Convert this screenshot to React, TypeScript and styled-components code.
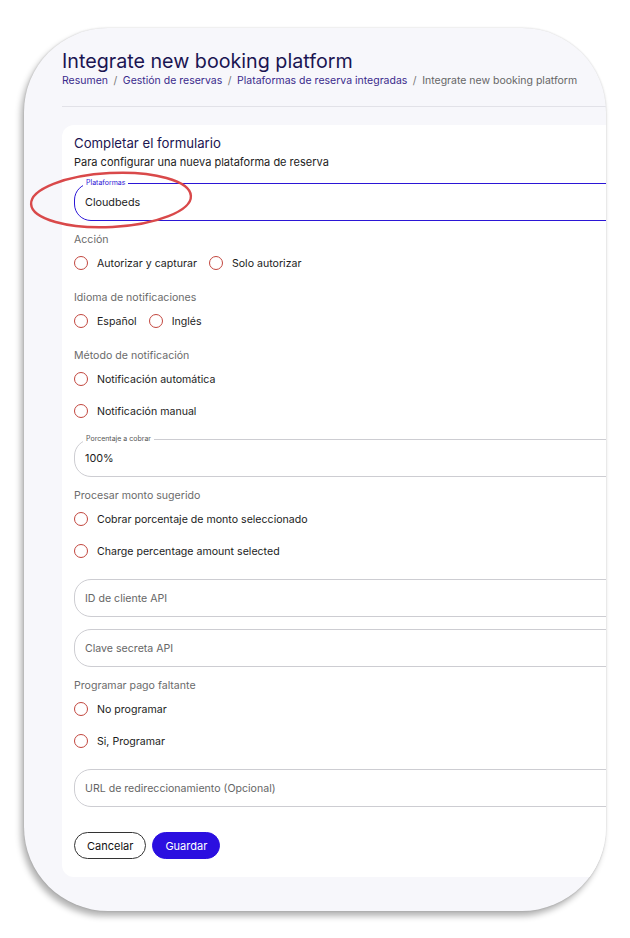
import React from "react";
import styled, { createGlobalStyle } from "styled-components";

const GlobalStyle = createGlobalStyle`
  * {
    box-sizing: border-box;
  }

  body {
    margin: 0;
    background: #ffffff;
    font-family: Inter, "Noto Sans", sans-serif;
    color: #1c1c1c;
  }
`;

const radioGroups = {
  accion: ["Autorizar y capturar", "Solo autorizar"],
  idioma: ["Español", "Inglés"],
  metodo: ["Notificación automática", "Notificación manual"],
  procesar: ["Cobrar porcentaje de monto seleccionado", "Charge percentage amount selected"],
  programar: ["No programar", "Si, Programar"],
};

const Radio = ({ label }: { label: string }) => (
  <RadioItem>
    <RadioCircle />
    <span>{label}</span>
  </RadioItem>
);

interface FieldProps {
  label?: string;
  value?: string;
  placeholder?: string;
  active?: boolean;
}

const Field = ({ label, value, placeholder, active }: FieldProps) => (
  <FieldBox $active={active}>
    {label && <FieldLabel $active={active}>{label}</FieldLabel>}
    {value ? <FieldValue>{value}</FieldValue> : <FieldPlaceholder>{placeholder}</FieldPlaceholder>}
  </FieldBox>
);

const App = () => {
  return (
    <Page>
      <GlobalStyle />
      <Frame>
        <Header>
          <Title>Integrate new booking platform</Title>
          <Breadcrumb>
            <Crumb>Resumen</Crumb>
            <Sep>/</Sep>
            <Crumb>Gestión de reservas</Crumb>
            <Sep>/</Sep>
            <Crumb>Plataformas de reserva integradas</Crumb>
            <Sep>/</Sep>
            <Current>Integrate new booking platform</Current>
          </Breadcrumb>
        </Header>
        <Divider />

        <Card>
          <CardHead>
            <CardTitle>Completar el formulario</CardTitle>
            <CardSubtitle>Para configurar una nueva plataforma de reserva</CardSubtitle>
          </CardHead>

          <Field label="Plataformas" value="Cloudbeds" active />

          <Group>
            <GroupLabel>Acción</GroupLabel>
            <InlineRow>
              {radioGroups.accion.map((r) => (
                <Radio key={r} label={r} />
              ))}
            </InlineRow>
          </Group>

          <Group>
            <GroupLabel>Idioma de notificaciones</GroupLabel>
            <InlineRow>
              {radioGroups.idioma.map((r) => (
                <Radio key={r} label={r} />
              ))}
            </InlineRow>
          </Group>

          <Group>
            <GroupLabel>Método de notificación</GroupLabel>
            {radioGroups.metodo.map((r) => (
              <Radio key={r} label={r} />
            ))}
          </Group>

          <Field label="Porcentaje a cobrar" value="100%" />

          <Group>
            <GroupLabel>Procesar monto sugerido</GroupLabel>
            {radioGroups.procesar.map((r) => (
              <Radio key={r} label={r} />
            ))}
          </Group>

          <Field placeholder="ID de cliente API" />
          <Field placeholder="Clave secreta API" />

          <Group>
            <GroupLabel>Programar pago faltante</GroupLabel>
            {radioGroups.programar.map((r) => (
              <Radio key={r} label={r} />
            ))}
          </Group>

          <Field placeholder="URL de redireccionamiento (Opcional)" />

          <Actions>
            <Button>Cancelar</Button>
            <Button $primary>Guardar</Button>
          </Actions>
        </Card>
      </Frame>

      {/* anotación roja sobre el campo Plataformas */}
      <Highlight viewBox="0 0 170 64" width="170" height="64">
        <ellipse
          cx="85"
          cy="32"
          rx="80"
          ry="27"
          transform="rotate(-3 85 32)"
          fill="none"
          stroke="#d9494a"
          strokeWidth="2.4"
        />
      </Highlight>
    </Page>
  );
};

export default App;

const Page = styled.div`
  position: relative;
  width: 630px;
  height: 938px;
  padding: 28px 24px 0 24px;
`;

const Frame = styled.div`
  width: 582px;
  height: 883px;
  border-radius: 84px;
  background: #f7f7fb;
  overflow: hidden;
  padding: 20px 0 0 38px;
  box-shadow:
    -3px 5px 6px rgba(0, 0, 0, 0.3),
    0 0 2px rgba(0, 0, 0, 0.18);
`;

const Header = styled.div`
  display: flex;
  flex-direction: column;
  gap: 0;
`;

const Title = styled.h1`
  margin: 0;
  font-size: 19.7px;
  font-weight: 400;
  line-height: 26px;
  color: #1b1552;
`;

const Breadcrumb = styled.div`
  display: flex;
  align-items: center;
  gap: 5.5px;
  font-size: 10.5px;
  white-space: nowrap;
`;

const Crumb = styled.span`
  color: #3a2a8c;
`;

const Sep = styled.span`
  color: #777;
`;

const Current = styled.span`
  color: #666;
`;

const Divider = styled.div`
  height: 1px;
  background: #e2e2e8;
  margin-top: 19px;
`;

const Card = styled.div`
  margin-top: 18px;
  width: 600px;
  background: #ffffff;
  border-radius: 12px;
  padding: 9px 12px 18px 12px;
  display: flex;
  flex-direction: column;
  gap: 12px;
`;

const CardHead = styled.div`
  display: flex;
  flex-direction: column;
  gap: 2px;
  margin-bottom: 1px;
`;

const CardTitle = styled.div`
  font-size: 13.2px;
  line-height: 18px;
  color: #1b1552;
`;

const CardSubtitle = styled.div`
  font-size: 11px;
  line-height: 16px;
  color: #222;
`;

const FieldBox = styled.div<{ $active?: boolean }>`
  position: relative;
  height: 38px;
  border: ${(p) => (p.$active ? "1.6px solid #2b16d6" : "1px solid #cdcdd2")};
  border-radius: 17px;
  display: flex;
  align-items: center;
  padding-left: 10px;
`;

const FieldLabel = styled.span<{ $active?: boolean }>`
  position: absolute;
  left: 8px;
  top: -6px;
  padding: 0 3px;
  background: #ffffff;
  font-size: 7px;
  line-height: 10px;
  color: ${(p) => (p.$active ? "#2b16d6" : "#555")};
`;

const FieldValue = styled.span`
  font-size: 10.8px;
  color: #1c1c1c;
`;

const FieldPlaceholder = styled.span`
  font-size: 10.6px;
  color: #666;
`;

const Group = styled.div`
  display: flex;
  flex-direction: column;
`;

const GroupLabel = styled.div`
  font-size: 10.6px;
  line-height: 14px;
  color: #6b6b6b;
`;

const InlineRow = styled.div`
  display: flex;
  gap: 12px;
`;

const RadioItem = styled.div`
  display: flex;
  align-items: center;
  gap: 9px;
  height: 32px;
  font-size: 10.6px;
  color: #1c1c1c;
`;

const RadioCircle = styled.span`
  width: 14px;
  height: 14px;
  border-radius: 50%;
  border: 1.8px solid #c2463e;
  flex-shrink: 0;
`;

const Actions = styled.div`
  display: flex;
  gap: 6px;
  margin-top: 13px;
`;

const Button = styled.button<{ $primary?: boolean }>`
  height: 27px;
  padding: 0 12px;
  border-radius: 14px;
  font-family: Inter, "Noto Sans", sans-serif;
  font-size: 11px;
  cursor: pointer;
  border: ${(p) => (p.$primary ? "1px solid #2b0fe0" : "1px solid #333")};
  background: ${(p) => (p.$primary ? "#2b0fe0" : "#ffffff")};
  color: ${(p) => (p.$primary ? "#ffffff" : "#111")};
`;

const Highlight = styled.svg`
  position: absolute;
  left: 26px;
  top: 168px;
  pointer-events: none;
`;
